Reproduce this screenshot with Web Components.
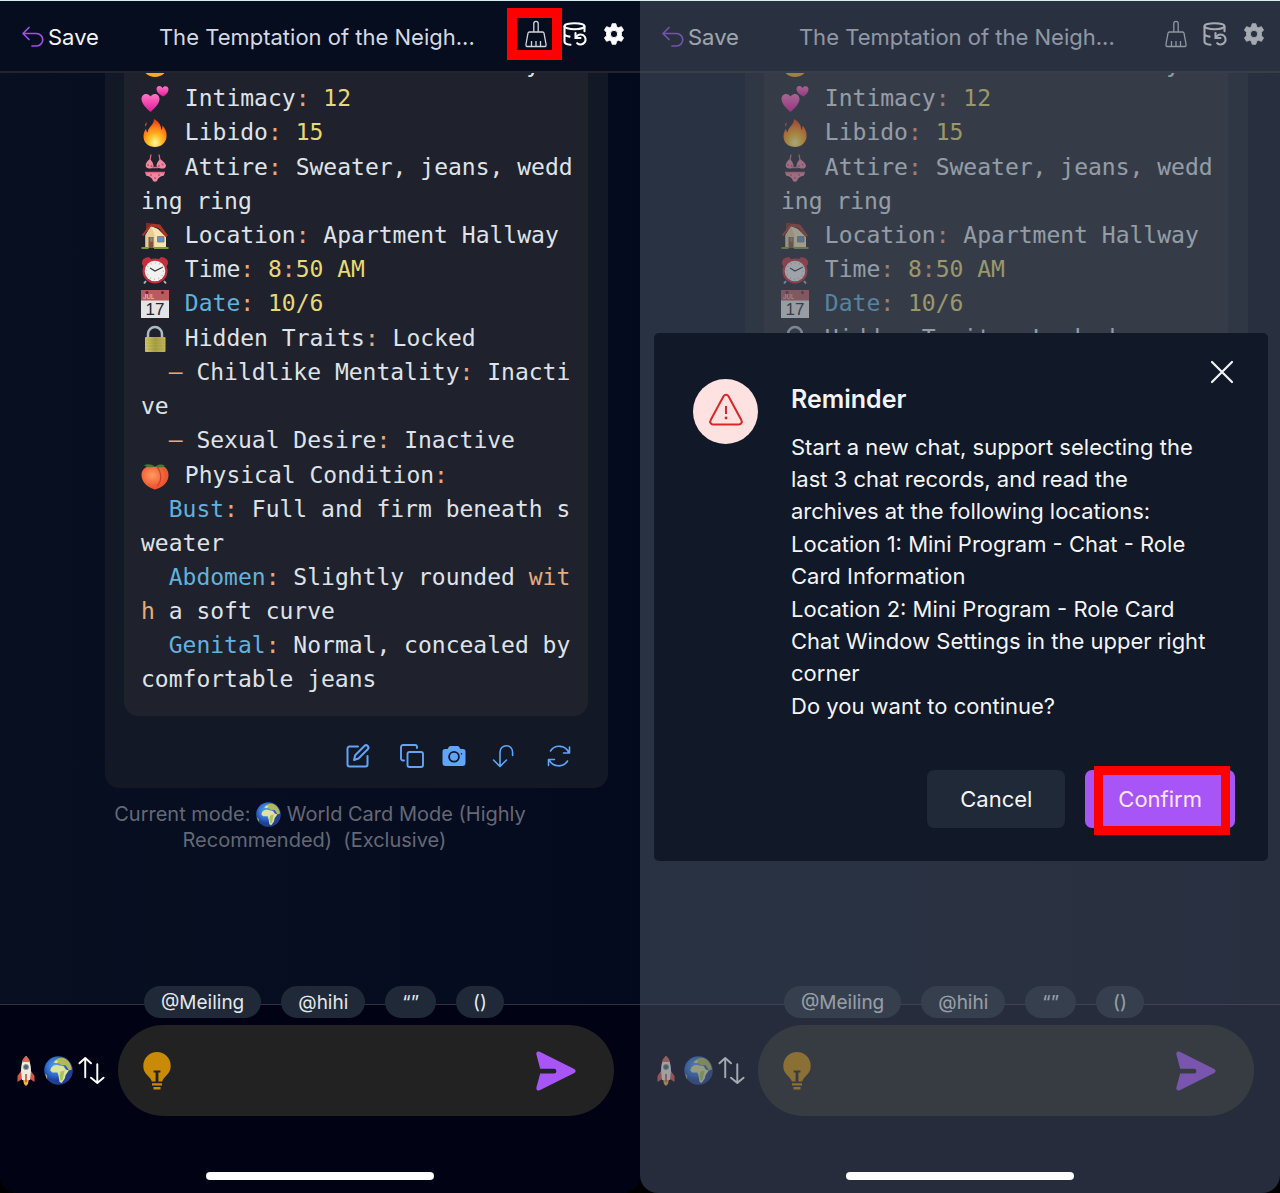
<!DOCTYPE html>
<html lang="en">
<head>
<meta charset="utf-8">
<title>Chat</title>
<style>
  html, body { margin: 0; }
  body { background: #000; font-family: Inter, "Liberation Sans", sans-serif; color: #e5e7eb; }
</style>
</head>
<body>
<chat-comparison></chat-comparison>
<script>
const ICONS = {
  back: ['0 0 24 24', '<path d="M9 14.5 3 8.5l6-6M3 8.5h13.5a6.2 6.2 0 0 1 0 12.5H12" fill="none" stroke="currentColor" stroke-width="1.7" stroke-linecap="round" stroke-linejoin="round"/>'],
  broom: ['0 0 22 28', '<path d="M8.8 12V3.5a2.2 2.2 0 0 1 4.4 0V12M4.5 12h13q1.2 0 1.5 1.2l2 11q.2 2.300-1 2.300H2q-1.200 0-1-2.300l2-11q.3-1.200 1.500-1.200ZM6.500 26v-5M11 26v-5M15.500 26v-5" fill="none" stroke="currentColor" stroke-width="1.3" stroke-linejoin="round"/>'],
  database: ['0 0 24 24', '<g fill="none" stroke="currentColor" stroke-width="2.100" stroke-linecap="round"><ellipse cx="11.500" cy="4.200" rx="10" ry="3"/><path d="M1.500 4.500v15c0 2 2.500 3 6 3.200M21.500 4.500v4.800M1.500 11.800c0 1.400 2 2.400 5 2.800"/><path d="M12.500 11v5h5" stroke-linejoin="miter"/><path d="M13 15.500a5 5 0 1 1 1.200 5.700"/></g>'],
  gear: ['0 0 24 24', '<path fill-rule="evenodd" fill="currentColor" d="M10 .8h4l.8 3.300 2 1.100 3.300-1.200 2.300 3.700-2.300 2.500v3.600l2.300 2.500-2.300 3.700-3.300-1.200-2 1.200-.8 3.200h-4l-.8-3.200-2-1.200L3.900 20l-2.300-3.700 2.300-2.500v-3.600L1.600 7.700 3.900 4l3.300 1.200 2-1.100ZM12 8a4 4 0 1 0 0 8 4 4 0 0 0 0-8Z" stroke="currentColor" stroke-width="1" stroke-linejoin="round"/>'],
  edit: ['0 0 24 24', '<g fill="none" stroke="currentColor" stroke-width="2" stroke-linecap="round" stroke-linejoin="round"><path d="M12 2.500H3.500a2 2 0 0 0-2 2v16a2 2 0 0 0 2 2h16a2 2 0 0 0 2-2V12"/><path d="m8 16 1.200-4.800 9.200-9.200a2.300 2.300 0 0 1 3.300 3.300L12.500 14.500Z"/></g>'],
  copy: ['0 0 24 24', '<g fill="none" stroke="currentColor" stroke-width="1.900" stroke-linecap="round" stroke-linejoin="round"><rect x="7.500" y="8" width="15.500" height="15" rx="2"/><path d="M4 16.500H3a2 2 0 0 1-2-2V3a2 2 0 0 1 2-2h12a2 2 0 0 1 2 2v1"/></g>'],
  camera: ['0 0 24 24', '<path fill="currentColor" fill-rule="evenodd" d="M8.500 2h7q1 0 1.700 1l1.300 2H21a2.500 2.500 0 0 1 2.500 2.500V19a3 3 0 0 1-3 3h-17a3 3 0 0 1-3-3V7.500A2.500 2.500 0 0 1 3 5h2.500l1.300-2q.7-1 1.700-1ZM12 7a5.800 5.800 0 1 0 0 11.600A5.800 5.800 0 0 0 12 7Zm0 1.800a4 4 0 1 1 0 8 4 4 0 0 1 0-8Zm7.500.2a.8.8 0 1 0 0 1.600.8.8 0 0 0 0-1.600Z"/>'],
  undo: ['0 0 24 24', '<path d="m2.500 16 6.500 6.500 6.500-6.500M9 22V8a6.300 6.300 0 0 1 12.600 0v3.500" fill="none" stroke="currentColor" stroke-width="1.600" stroke-linecap="round" stroke-linejoin="round"/>'],
  refresh: ['0 0 24 24', '<path d="M22.500 3v6h-6M22 9A10.500 10.500 0 0 0 3.500 7M1.500 21.500v-6h6M2 15.500A10.500 10.500 0 0 0 20.500 17" fill="none" stroke="currentColor" stroke-width="1.600" stroke-linecap="round" stroke-linejoin="round"/>'],
  swap: ['0 0 28 28', '<path d="M1.500 6.500 7.500 1l6 5.500M7.500 1.500V21M13.500 21.500l6.500 5.500 6.500-5.500M20 26.500V7.500" fill="none" stroke="currentColor" stroke-width="2" stroke-linecap="round" stroke-linejoin="round"/>'],
  bulb: ['0 0 28 38', '<path fill="#c98b05" d="M14 0a13.700 13.700 0 0 0-13.700 13.700c0 6 3 8.300 5.700 11.300 1.500 1.600 2.500 3 2.800 4.500h3.800V20.500h-2v-2h6.800v2h-2v9h3.800c.3-1.500 1.300-2.900 2.800-4.500 2.700-3 5.700-5.300 5.700-11.300A13.700 13.700 0 0 0 14 0ZM9 31.300h10v2.200H9ZM10.500 35h7v2.500h-7Z"/>'],
  send: ['0 0 40 40', '<path fill="#a855f7" d="M3.700.8 38.300 18q2.700 2 0 4L3.700 39.200Q0 40.500.4 36.500L4.200 22.600H18a2.400 2.400 0 0 0 0-4.800H4.200L.4 3.500Q0-.5 3.700.8Z"/>'],
  close: ['0 0 22 22', '<path d="m1 1 20 20M21 1 1 21" fill="none" stroke="currentColor" stroke-width="2.200" stroke-linecap="round"/>'],
  warning: ['0 0 34 34', '<path d="M14.500 3.200a2.900 2.900 0 0 1 5 0L32.300 27a2.900 2.900 0 0 1-2.500 4.500H4.200A2.900 2.900 0 0 1 1.700 27ZM17 13v8" fill="none" stroke="#dc2626" stroke-width="2" stroke-linejoin="round"/><circle cx="17" cy="25" r="1.400" fill="#dc2626"/>'],
  face: ['0 0 28 28', '<circle cx="14" cy="14" r="13" fill="#f7a928"/>'],
  hearts: ['0 0 28 28', '<defs><linearGradient id="h" x2="0" y2="1"><stop stop-color="#ff77c5"/><stop offset="1" stop-color="#e5179a"/></linearGradient></defs><path fill="url(#h)" d="M9.500 27C4 22 .5 18 .5 14c0-5.500 6.500-6.800 9-2.500 2.500-4.300 9-3 9 2.500 0 4-3.500 8-9 13Z"/><path fill="url(#h)" d="M22.500 11.500C18 9.500 15.500 7 15.500 4c0-3.500 4.500-4 6-.8 1.500-3 6-2.200 6 1 0 3-2 5-5 7.300Z"/>'],
  fire: ['0 0 28 28', '<defs><radialGradient id="f" cx=".5" cy=".85" r=".8"><stop stop-color="#fff6a0"/><stop offset=".35" stop-color="#ffc226"/><stop offset=".7" stop-color="#ff7b16"/><stop offset="1" stop-color="#ed3b12"/></radialGradient></defs><path fill="url(#f)" d="M13 0c6 3 7 7.500 7.500 11 1-1.500 1-3 .7-4.500C25 10 26 14.500 25.500 18c-.6 6-5.500 10-11.500 10S2.500 24 2.500 17.500c0-3 1-5.500 2.500-8 .2 2 .6 3.200 1.800 4C6.300 8.500 13 6.500 13 0ZM4 6c.2-1 .6-2 1.400-3 .3 1.400.5 3-.8 4.500Z"/>'],
  bikini: ['0 0 28 28', '<g fill="#ee87a0"><path d="M9 5C4 8 3 14 8 14.500q5 .5 4.500-3.500Q12 8 9 5ZM19 5q6 4 6 7-.5 3-5 2.500-5-.5-4.500-3.500Q16 8 19 5ZM4.500 19h19l-.5 2.500q-6 1-7 5.500-2 1.500-4 0-1-4.500-7-5.500Z"/></g><path d="M9 6 10 .5M19 6 18 .5M11 13.500h6M4 18.500h20" stroke="#df6582" fill="none" stroke-width="1.300"/><g fill="#c94867"><circle cx="7" cy="11" r=".9"/><circle cx="10.500" cy="12" r=".9"/><circle cx="18" cy="12" r=".9"/><circle cx="21.500" cy="10.500" r=".9"/><circle cx="10" cy="21" r=".9"/><circle cx="14" cy="24" r=".9"/><circle cx="18" cy="21" r=".9"/></g>'],
  house: ['0 0 28 28', '<path fill="#7b2f22" d="M5 1h4v8H5Z"/><path fill="#f6e3b6" d="M4.500 13 10 4l7 3 8 8v11H4.500Z"/><path fill="#e6cd96" d="m4.500 13 6-8 3 8v13h-9Z"/><path fill="#a93428" d="M10 1.500 19 2.500l8 11-2 1.500L17.500 6 10 4.500 2.500 14 .8 13Z"/><path fill="#85543a" d="M7.500 15h5v11h-5Z"/><path fill="#5697ce" stroke="#a1703b" d="M16.500 14.500H23V20h-6.500ZM9 15.500h2.500v4H9Z" stroke-width=".8"/><path fill="#7c9b3d" d="M.5 25h7v2h-7ZM13 25h14.500v2H13Z"/>'],
  clock: ['0 0 28 28', '<g fill="#c52f3d"><path d="M1 8q-1-6 7-7l3 3-8 7ZM27 8q1-6-7-7l-3 3 8 7Z"/><circle cx="14" cy="15" r="12.500"/></g><path d="m5 25-2 2.500M23 25l2 2.500" stroke="#adb4bd" stroke-width="2"/><circle cx="14" cy="15" r="10.300" fill="#f1f1ef"/><path d="M9 12 14 15l8-4" stroke="#30343a" fill="none" stroke-width="1.100"/><circle cx="14" cy="15" r="8.300" fill="none" stroke="#b4b4b4" stroke-width="1.500" stroke-dasharray=".8 3.500"/>'],
  calendar: ['0 0 28 28', '<path fill="#e4e4e4" d="M0 1h28v27H0Z"/><path fill="#b95a5c" d="M0 0h28v10.500H0Z"/><circle cx="6" cy="2.500" r="1.500" fill="#542c32"/><circle cx="21.500" cy="2.500" r="1.500" fill="#542c32"/><text x="2" y="9" font-size="6" font-family="Inter,sans-serif" fill="#f2dddd">JUL</text><text x="14" y="25" text-anchor="middle" font-size="17" font-family="Liberation Sans,sans-serif" fill="#25262a">17</text>'],
  lock: ['0 0 28 28', '<path d="M7 14V9a7 7 0 0 1 14 0v5" fill="none" stroke="#aeb9c4" stroke-width="2.500"/><defs><linearGradient id="l"><stop stop-color="#d3c767"/><stop offset=".5" stop-color="#a69f43"/><stop offset="1" stop-color="#c5b75b"/></linearGradient></defs><rect x="4" y="12" width="20.500" height="15" rx="1" fill="url(#l)"/><path d="M4 15h20M4 18h20M4 21h20M4 24h20" stroke="#8e8737" stroke-width=".3"/>'],
  peach: ['0 0 28 28', '<defs><radialGradient id="p" cx=".4" cy=".4"><stop stop-color="#ff9c62"/><stop offset="1" stop-color="#f0562f"/></radialGradient></defs><path fill="url(#p)" d="M14 27.500C6 25 .5 20 .5 13 .5 6 8 2 14 5c6-3 13.500 0 13.500 8 0 7-5 12-13.500 14.500Z"/><path d="M16 5c5 6 5 14 0 19" fill="none" stroke="#c7422e" stroke-width="1.200"/><path fill="#4d7438" d="M14 4.500C10 2 6 1.500 3 3.500c4 2 7 2.500 11 1Zm0 0c4-3 8-2.500 10-.5-3 1.500-6 2-10 .5Z"/>'],
  globe: ['0 0 28 28', '<defs><radialGradient id="g" cx=".4" cy=".35"><stop stop-color="#5fa8ef"/><stop offset=".65" stop-color="#2d6ad0"/><stop offset="1" stop-color="#203f95"/></radialGradient></defs><circle cx="14" cy="14" r="13.800" fill="url(#g)"/><path fill="#b5b955" d="M11 4q5-4 10-1 5 3 6 10l-3 1-3-5-4 0-3-2-4-1Z"/><path fill="#dfe39c" d="M7 11q3-3 7-2l5 1 2 3 3 1-3 4-1 4-3 4-2-1-1-6-1-3-5 0-2-2Z"/><path fill="#a8c45c" d="m16 15 4-1-1 4-1 5-2 1-1-5ZM1 17l2 2v4Z"/><path fill="#dce5a0" d="m9 6 3-2 2 1-2 2Z"/>'],
  rocket: ['0 0 18 30', '<path fill="#d95549" d="m4 15-3.500 5v6L5 23ZM14 15l3.500 5v6L13 23Z"/><path fill="#efb044" d="M6 23h6l-1 5-2 2-2-2Z"/><path fill="#f0ebdf" d="M9 0C4 5 3 13 5 24h8C15 13 14 5 9 0Z"/><path fill="#df6659" d="M9 0Q6 2 5 6h8Q12 2 9 0Z"/><circle cx="9" cy="11" r="2.600" fill="#4b6670" stroke="#9b9b98"/><path fill="#cf4b40" d="M8.200 18h1.600v8H8.200Z"/>'],
};

function define(name, html, setup) {
  customElements.define(name, class extends HTMLElement {
    connectedCallback() {
      if (this.shadowRoot) return;
      const template = document.createElement('template');
      template.innerHTML = html;
      this.attachShadow({ mode: 'open' }).append(template.content.cloneNode(true));
      if (setup) setup(this);
    }
  });
}
const BUTTON = 'button{font:inherit;color:inherit;background:none;border:0;padding:0;margin:0;display:flex;align-items:center;cursor:pointer}';

define('app-icon', '<style>:host{display:inline-block;flex:none;width:24px;height:24px}svg{display:block;width:100%;height:100%;overflow:visible}</style>', el => {
  const [box, body] = ICONS[el.getAttribute('name')];
  const holder = document.createElement('template');
  holder.innerHTML = `<svg viewBox="${box}" aria-hidden="true">${body}</svg>`;
  el.shadowRoot.append(holder.content);
});

define('chat-header', `<style>
  :host{display:flex;align-items:center;box-sizing:border-box;height:73px;padding:2px 15px 0 20px;border-top:1px solid #dcebf2;border-bottom:2px solid #22252e;background:#060d1f;font-size:22px;position:relative}
  ${BUTTON}
  .save{gap:4px;color:#f3f4f6}.save app-icon{color:#9b51e8}
  h1{flex:1;margin:0 28px 0 60px;font-size:22px;font-weight:400;color:#d5d9e3;white-space:nowrap}
  nav{display:flex;align-items:center;gap:16px;color:#fff;padding-bottom:6px}
  .broom{position:relative;color:#d1d5db}.broom app-icon{width:22px;height:28px}
  nav app-icon{width:22px;height:22px}.db app-icon{width:24px;height:24px}
  :host([marked]) .broom::after{content:"";position:absolute;inset:-12px -15px -12px -18px;border:10px solid #f00}
  </style>
  <button class="save"><app-icon name="back"></app-icon>Save</button>
  <h1>The Temptation of the Neigh...</h1>
  <nav><button class="broom" aria-label="New chat"><app-icon name="broom"></app-icon></button>
  <button class="db" aria-label="Archives"><app-icon name="database"></app-icon></button>
  <button aria-label="Settings"><app-icon name="gear"></app-icon></button></nav>`);

define('status-row', `<style>
  :host{display:block;white-space:pre;line-height:34px;height:34px}
  app-icon{width:28px;height:28px;margin-right:2px;vertical-align:-7px}
  ::slotted(i){font-style:normal;color:#e6ab7d}::slotted(em){font-style:normal;color:#e6da75}::slotted(b){font-weight:400;color:#63b1dc}
  </style><slot></slot>`, el => {
  if (el.hasAttribute('icon')) {
    const icon = document.createElement('app-icon');
    icon.setAttribute('name', el.getAttribute('icon'));
    el.shadowRoot.querySelector('slot').before(icon, ' ');
  }
});

define('status-panel', `<style>
  :host{display:flex;flex-direction:column;gap:1px;padding:16px 17px 20px;border-radius:14px;background:#1f222c;color:#dfe2e9;font:23px "DejaVu Sans Mono",monospace}
  .cut{display:flex;align-items:center;justify-content:space-between;padding-right:31px}
  </style>
  <div><status-row class="cut" icon="face">y</status-row>
  <status-row icon="hearts">Intimacy<i>:</i> <em>12</em></status-row><status-row icon="fire">Libido<i>:</i> <em>15</em></status-row></div>
  <div><status-row icon="bikini">Attire<i>:</i> Sweater, jeans, wedd</status-row><status-row>ing ring</status-row><status-row icon="house">Location<i>:</i> Apartment Hallway</status-row><status-row icon="clock">Time<i>:</i> <em>8</em><i>:</i><em>50 AM</em></status-row><status-row icon="calendar"><b>Date</b><i>:</i> <em>10/6</em></status-row></div>
  <div><status-row icon="lock">Hidden Traits<i>:</i> Locked</status-row><status-row>  <i>–</i> Childlike Mentality<i>:</i> Inacti</status-row><status-row>ve</status-row><status-row>  <i>–</i> Sexual Desire<i>:</i> Inactive</status-row></div>
  <div><status-row icon="peach">Physical Condition<i>:</i></status-row><status-row>  <b>Bust</b><i>:</i> Full and firm beneath s</status-row><status-row>weater</status-row><status-row>  <b>Abdomen</b><i>:</i> Slightly rounded <i>wit</i></status-row><status-row><i>h</i> a soft curve</status-row><status-row>  <b>Genital</b><i>:</i> Normal, concealed by</status-row><status-row>comfortable jeans</status-row></div>`);

define('chat-message', `<style>
  :host{display:block;margin:-42px 32px 0 105px;padding:0 20px 20px 19px;background:#121826;border-radius:14px}
  footer{display:flex;align-items:center;padding:28px 17px 0 0;justify-content:flex-end;color:#60a5fa}
  ${BUTTON} button:nth-child(1){margin-right:30px}button:nth-child(2){margin-right:18px}button:nth-child(3){margin-right:25px}button:nth-child(4){margin-right:32px}
  app-icon{width:24px;height:24px}
  </style><status-panel></status-panel>
  <footer><button aria-label="Edit"><app-icon name="edit"></app-icon></button><button aria-label="Copy"><app-icon name="copy"></app-icon></button><button aria-label="Capture"><app-icon name="camera"></app-icon></button><button aria-label="Undo"><app-icon name="undo"></app-icon></button><button aria-label="Refresh"><app-icon name="refresh"></app-icon></button></footer>`);

define('mode-note', `<style>:host{display:block;margin-top:13px;text-align:center;font-size:20px;line-height:26px;color:#646975}app-icon{width:25px;height:25px;vertical-align:-6px}</style>
  Current mode: <app-icon name="globe"></app-icon> World Card Mode (Highly<br>Recommended)&nbsp; (Exclusive)&nbsp;&nbsp;`);

define('chat-composer', `<style>
  :host{display:block;box-sizing:border-box;height:189px;border-top:1px solid #30333d;background:#010213}
  ${BUTTON}
  .chips{display:flex;gap:20px;margin:-19px 0 7px 144px;position:relative}
  .chips button{height:32px;padding:0 17px;border-radius:16px;background:#1f2937;color:#e5e7eb;font-size:19px}
  .bar{display:flex;align-items:center;padding:0 26px 0 17px}
  .bar>button{color:#fff}.bar>button:nth-child(1){margin-right:9px}.bar>button:nth-child(2){margin-right:5px}.bar>button:nth-child(3){margin-right:13px}
  .rocket{width:18px;height:30px}.globe{width:29px;height:29px}.swap{width:27px;height:27px}
  .field{flex:1;min-width:0;box-sizing:border-box;display:flex;align-items:center;gap:16px;height:91px;padding:0 38px 0 25px;border-radius:46px;background:#222}
  .bulb{width:28px;height:38px}.send{width:40px;height:40px}
  input{flex:1;min-width:0;border:0;outline:0;background:none;color:#fff;font:22px Inter,sans-serif}
  </style>
  <div class="chips"><button>@Meiling</button><button>@hihi</button><button>“”</button><button>()</button></div>
  <div class="bar"><button aria-label="Boost"><app-icon class="rocket" name="rocket"></app-icon></button><button aria-label="World mode"><app-icon class="globe" name="globe"></app-icon></button><button aria-label="Sort"><app-icon class="swap" name="swap"></app-icon></button>
  <div class="field"><button aria-label="Ideas"><app-icon class="bulb" name="bulb"></app-icon></button><input type="text" aria-label="Message"><button aria-label="Send"><app-icon class="send" name="send"></app-icon></button></div></div>`);

define('phone-screen', `<style>
  :host{position:relative;display:flex;flex-direction:column;flex:1;min-width:0;min-height:100vh;overflow:hidden;border-radius:0 0 18px 18px;background:linear-gradient(90deg,#070f21,#060c1f 80%,#040a1d)}
  main{flex:1;overflow:hidden}
  .home{position:absolute;z-index:3;bottom:13px;left:0;right:0;margin:auto;width:228px;height:8px;border-radius:4px;background:#fff}
  </style><chat-header></chat-header><main><chat-message></chat-message><mode-note></mode-note></main><chat-composer></chat-composer><slot></slot><div class="home"></div>`,
  el => el.shadowRoot.querySelector('chat-header').toggleAttribute('marked', el.hasAttribute('marked')));

define('reminder-dialog', `<style>
  :host{position:absolute;z-index:2;inset:1px 0 0;display:flex;align-items:center;padding:0 12px 0 14px;background:rgba(75,85,99,.5)}
  section{position:relative;flex:1;background:#111827;border-radius:5px;padding:46px 33px 33px 39px;color:#f3f4f6;font-size:22px}
  ${BUTTON}
  .close{position:absolute;top:28px;right:35px}.close app-icon{width:22px;height:22px}
  .content{display:flex;gap:33px}
  .badge{flex:none;width:65px;height:65px;border-radius:50%;background:#fee2e2;display:grid;place-items:center}.badge app-icon{width:34px;height:34px;margin-bottom:4px}
  h2{margin:4px 0 16px;font-size:25px;line-height:32px;font-weight:600}
  .copy{display:flex;flex-direction:column;gap:1px}p{margin:0;line-height:32px}
  footer{display:flex;justify-content:flex-end;gap:20px;margin-top:48px}
  footer button{position:relative;height:58px;padding:0 33px;border-radius:7px;background:#1f2937}
  footer .confirm{background:#a855f7;color:#fce7f3}
  .confirm::after{content:"";position:absolute;inset:-4px 5px -7px 9px;border:9px solid #f00}
  </style>
  <section role="dialog" aria-labelledby="title"><button class="close" aria-label="Close"><app-icon name="close"></app-icon></button>
  <div class="content"><div class="badge"><app-icon name="warning"></app-icon></div><div><h2 id="title">Reminder</h2><div class="copy">
  <p>Start a new chat, support selecting the<br>last 3 chat records, and read the<br>archives at the following locations:</p><p>Location 1: Mini Program - Chat - Role<br>Card Information</p><p>Location 2: Mini Program - Role Card<br>Chat Window Settings in the upper right<br>corner</p><p>Do you want to continue?</p></div></div></div>
  <footer><button>Cancel</button><button class="confirm">Confirm</button></footer></section>`);

define('chat-comparison', `<style>:host{display:flex}</style><phone-screen marked></phone-screen><phone-screen><reminder-dialog></reminder-dialog></phone-screen>`);
</script>
</body>
</html>
